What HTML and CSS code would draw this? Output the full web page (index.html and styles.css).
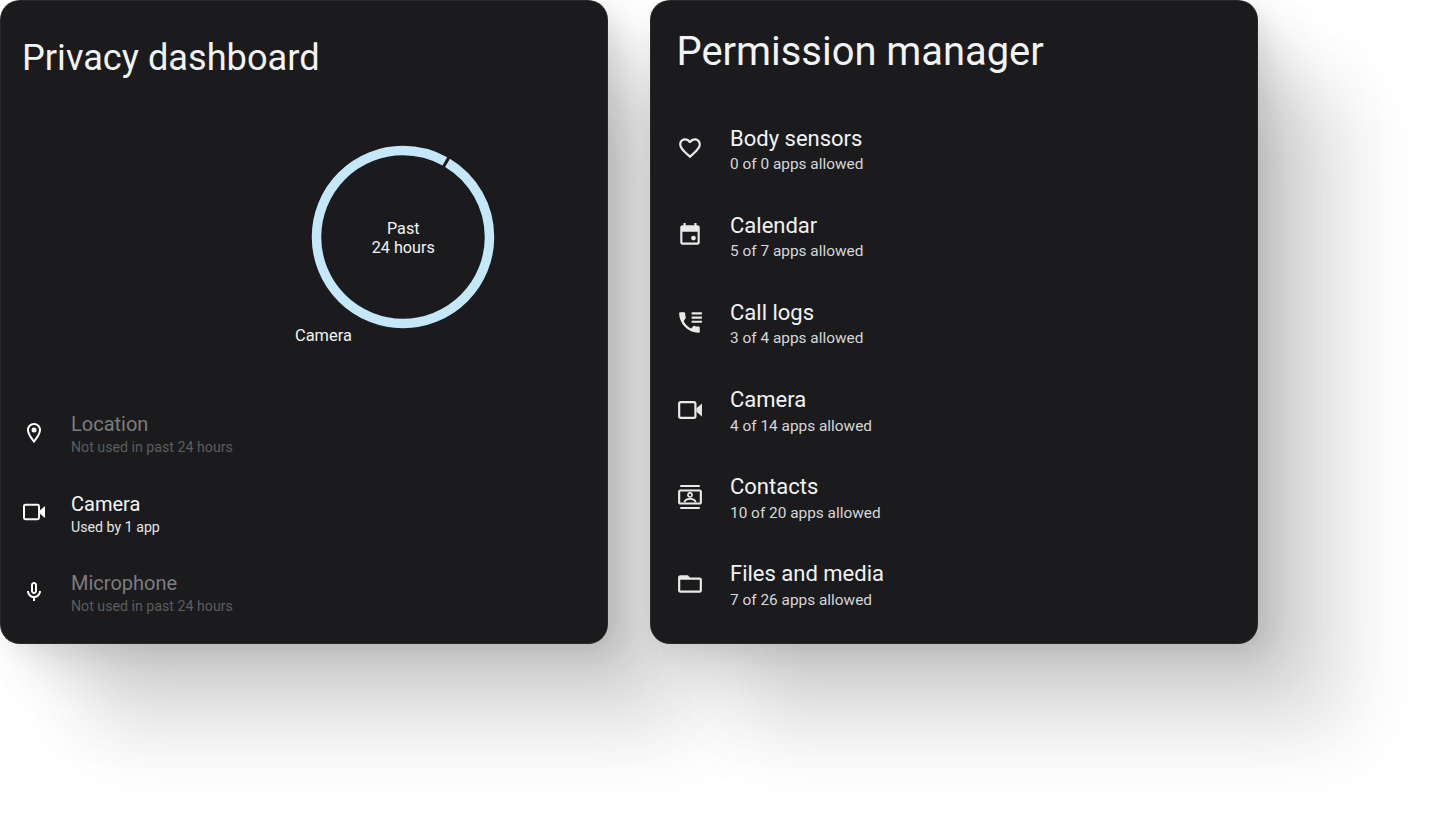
FILE: index.html
```html
<!DOCTYPE html>
<html lang="en">
<head>
<meta charset="utf-8">
<title>Privacy dashboard and Permission manager</title>
<link rel="stylesheet" href="styles.css">
</head>
<body>
<svg class="defs" width="0" height="0" aria-hidden="true">
  <symbol id="i-video" viewBox="0 0 24 24">
    <rect x="2" y="4.8" width="15" height="14.4" rx="1.4" fill="none" stroke="currentColor" stroke-width="2"/>
    <path d="M18 10.3 23 6v12l-5-4.3z" fill="currentColor"/>
  </symbol>
  <symbol id="i-place" viewBox="0 0 24 24">
    <path fill="currentColor" d="M12 2C8.13 2 5 5.13 5 9c0 5.25 7 13 7 13s7-7.75 7-13c0-3.87-3.13-7-7-7zM7 9c0-2.76 2.24-5 5-5s5 2.24 5 5c0 2.88-2.88 7.19-5 9.88C9.92 16.21 7 11.85 7 9z"/>
    <circle cx="12" cy="9" r="2.5" fill="currentColor"/>
  </symbol>
  <symbol id="i-mic" viewBox="0 0 24 24">
    <path fill="currentColor" d="M12 14c1.66 0 3-1.34 3-3V5c0-1.66-1.34-3-3-3S9 3.34 9 5v6c0 1.66 1.34 3 3 3zm-1-9c0-.55.45-1 1-1s1 .45 1 1v6c0 .55-.45 1-1 1s-1-.45-1-1V5zm6 6c0 2.76-2.24 5-5 5s-5-2.24-5-5H5c0 3.53 2.61 6.43 6 6.92V21h2v-3.08c3.39-.49 6-3.39 6-6.92h-2z"/>
  </symbol>
  <symbol id="i-heart" viewBox="0 0 24 24">
    <path fill="currentColor" d="M16.5 3c-1.74 0-3.41.81-4.5 2.09C10.91 3.81 9.24 3 7.5 3 4.42 3 2 5.42 2 8.5c0 3.78 3.4 6.86 8.55 11.54L12 21.35l1.45-1.32C18.6 15.36 22 12.28 22 8.5 22 5.42 19.58 3 16.5 3zm-4.4 15.55l-.1.1-.1-.1C7.14 14.24 4 11.39 4 8.5 4 6.5 5.5 5 7.5 5c1.54 0 3.04.99 3.57 2.36h1.87C13.46 5.99 14.96 5 16.5 5c2 0 3.5 1.5 3.5 3.5 0 2.89-3.14 5.74-7.9 10.05z"/>
  </symbol>
  <symbol id="i-event" viewBox="0 0 24 24">
    <path fill="currentColor" d="M19 3h-1V1h-2v2H8V1H6v2H5c-1.11 0-2 .9-2 2v14c0 1.1.89 2 2 2h14c1.1 0 2-.9 2-2V5c0-1.1-.9-2-2-2zm0 16H5V9h14v10z"/>
    <circle cx="15.2" cy="14.8" r="2.2" fill="currentColor"/>
  </symbol>
  <symbol id="i-calllog" viewBox="0 0 24 24">
    <path fill="currentColor" d="M6.2 11.2c1.5 2.9 3.9 5.3 6.8 6.8l2.2-2.2c.3-.3.7-.4 1-.2 1.1.4 2.3.6 3.6.6.6 0 1.2.5 1.2 1V21c0 .6-.5 1-1 1C10.4 22 2 13.6 2 3.8 2 3.3 2.5 3 3 3h3.500c.6 0 1 .4 1 1 0 1.2.2 2.4.6 3.500.1.400 0 .8-.2 1.100z"/>
    <path fill="currentColor" d="M13.500 3H23v2h-9.500zM13.500 6.900H23v2h-9.500zM13.500 10.800H23v2h-9.500z"/>
  </symbol>
  <symbol id="i-contacts" viewBox="0 0 24 24">
    <path fill="currentColor" d="M3 1h18v1.800H3zM3 21.200h18V23H3zM3 5h18c1.100 0 2 .9 2 2v10c0 1.100-.9 2-2 2H3c-1.100 0-2-.9-2-2V7c0-1.100.9-2 2-2zm0 1.900V17h18V6.900z"/>
    <path fill="none" stroke="currentColor" stroke-width="1.600" d="M12 8.200a1.900 1.900 0 1 0 .01 0zM6.800 16.800c.5-2.200 2.700-3 5.200-3s4.700.8 5.200 3"/>
  </symbol>
  <symbol id="i-folder" viewBox="0 0 24 24">
    <path fill="currentColor" d="M21 6h-9l-2-2H3c-1.100 0-2 .9-2 2v12c0 1.100.9 2 2 2h18c1.100 0 2-.9 2-2V8c0-1.100-.9-2-2-2zm0 12H3V8h18v10z"/>
  </symbol>
</svg>

<main class="stage">
  <section class="card dash">
    <h1 class="dash-title">Privacy dashboard</h1>
    <div class="chart">
      <div class="ring-wrap">
        <svg class="ring" width="184" height="184" viewBox="0 0 184 184" aria-hidden="true">
          <circle class="ring-arc" cx="92" cy="92" r="86.500" pathLength="360" stroke-dasharray="358 2" stroke-dashoffset="-31" transform="rotate(-90 92 92)"/>
        </svg>
        <div class="ring-text">Past<br>24 hours</div>
        <div class="ring-label">Camera</div>
      </div>
    </div>
    <ul class="dash-list">
      <li class="dash-row off">
        <svg class="dash-icon"><use href="#i-place"/></svg>
        <div><div class="dash-name">Location</div><div class="dash-sub">Not used in past 24 hours</div></div>
      </li>
      <li class="dash-row">
        <svg class="dash-icon"><use href="#i-video"/></svg>
        <div><div class="dash-name">Camera</div><div class="dash-sub">Used by 1 app</div></div>
      </li>
      <li class="dash-row off">
        <svg class="dash-icon"><use href="#i-mic"/></svg>
        <div><div class="dash-name">Microphone</div><div class="dash-sub">Not used in past 24 hours</div></div>
      </li>
    </ul>
  </section>

  <section class="card perm">
    <h1 class="perm-title">Permission manager</h1>
    <ul class="perm-list">
      <li class="perm-row">
        <svg class="perm-icon"><use href="#i-heart"/></svg>
        <div><div class="perm-name">Body sensors</div><div class="perm-sub">0 of 0 apps allowed</div></div>
      </li>
      <li class="perm-row">
        <svg class="perm-icon"><use href="#i-event"/></svg>
        <div><div class="perm-name">Calendar</div><div class="perm-sub">5 of 7 apps allowed</div></div>
      </li>
      <li class="perm-row">
        <svg class="perm-icon"><use href="#i-calllog"/></svg>
        <div><div class="perm-name">Call logs</div><div class="perm-sub">3 of 4 apps allowed</div></div>
      </li>
      <li class="perm-row">
        <svg class="perm-icon"><use href="#i-video"/></svg>
        <div><div class="perm-name">Camera</div><div class="perm-sub">4 of 14 apps allowed</div></div>
      </li>
      <li class="perm-row">
        <svg class="perm-icon"><use href="#i-contacts"/></svg>
        <div><div class="perm-name">Contacts</div><div class="perm-sub">10 of 20 apps allowed</div></div>
      </li>
      <li class="perm-row">
        <svg class="perm-icon"><use href="#i-folder"/></svg>
        <div><div class="perm-name">Files and media</div><div class="perm-sub">7 of 26 apps allowed</div></div>
      </li>
    </ul>
  </section>
</main>
</body>
</html>
```

FILE: styles.css
```css
* { box-sizing: border-box; }

html, body {
  margin: 0;
  height: 100%;
  background: #fff;
  overflow: hidden;
}

body {
  font-family: Roboto, "Liberation Sans", sans-serif;
  color: #f1f3f4;
}

.defs { display: block; height: 0; }

.stage {
  display: flex;
  gap: 42px;
  align-items: flex-start;
}

.card {
  width: 608px;
  height: 643.5px;
  border-radius: 20px;
  background: #1b1b1d;
  box-shadow:
    inset 0 0 0 1px rgba(255, 255, 255, 0.06),
    8px 8px 24px rgba(0, 0, 0, 0.07),
    24px 24px 50px rgba(0, 0, 0, 0.09),
    60px 60px 80px rgba(0, 0, 0, 0.08),
    95px 95px 80px rgba(0, 0, 0, 0.09);
  flex: none;
}

ul { list-style: none; margin: 0; padding: 0; }

h1 { margin: 0; font-weight: 400; }

/* Privacy dashboard */
.dash { display: flex; flex-direction: column; }

.dash-title {
  font-size: 36.2px;
  line-height: 42px;
  padding: 37px 0 0 22px;
}

.chart {
  height: 298px;
  padding: 66px 0 0 310.5px;
}

.ring-wrap { position: relative; width: 184px; height: 184px; }

.ring { display: block; }

.ring-arc {
  fill: none;
  stroke: #c4e7fa;
  stroke-width: 9.5px;
}

.ring-text {
  position: absolute;
  inset: 1px 0 0 1.5px;
  display: flex;
  align-items: center;
  justify-content: center;
  text-align: center;
  font-size: 16.2px;
  line-height: 19px;
}

.ring-label {
  position: absolute;
  left: -15.5px;
  top: 181px;
  font-size: 16.4px;
  line-height: 19px;
}

.dash-list { padding-left: 22px; margin-top: 18px; }

.dash-row {
  height: 79.5px;
  display: flex;
  align-items: center;
  gap: 25px;
  color: #f4f5f5;
}

.dash-icon { width: 24px; height: 24px; flex: none; color: #fff; margin-bottom: 4px; }

.dash-name { font-size: 20px; line-height: 24px; }

.dash-sub { font-size: 14.2px; line-height: 19px; color: #e4e6e6; margin-top: 2px; }

.off .dash-name { color: #7c7d7e; }

.off .dash-sub { color: #5c5d5f; }

/* Permission manager */
.perm-title {
  font-size: 39.9px;
  line-height: 48px;
  padding: 28px 0 0 26.5px;
}

.perm-list { padding: 30.4px 0 0 27px; }

.perm-row {
  height: 87.1px;
  display: flex;
  align-items: center;
  gap: 27px;
}

.perm-icon { width: 26px; height: 26px; flex: none; color: #e8eaea; margin-bottom: 3.4px; }

.perm-name { font-size: 22px; line-height: 26px; color: #f1f3f4; }

.perm-sub { font-size: 15.4px; line-height: 20px; color: #d5d7d8; margin-top: 2.6px; }
```
